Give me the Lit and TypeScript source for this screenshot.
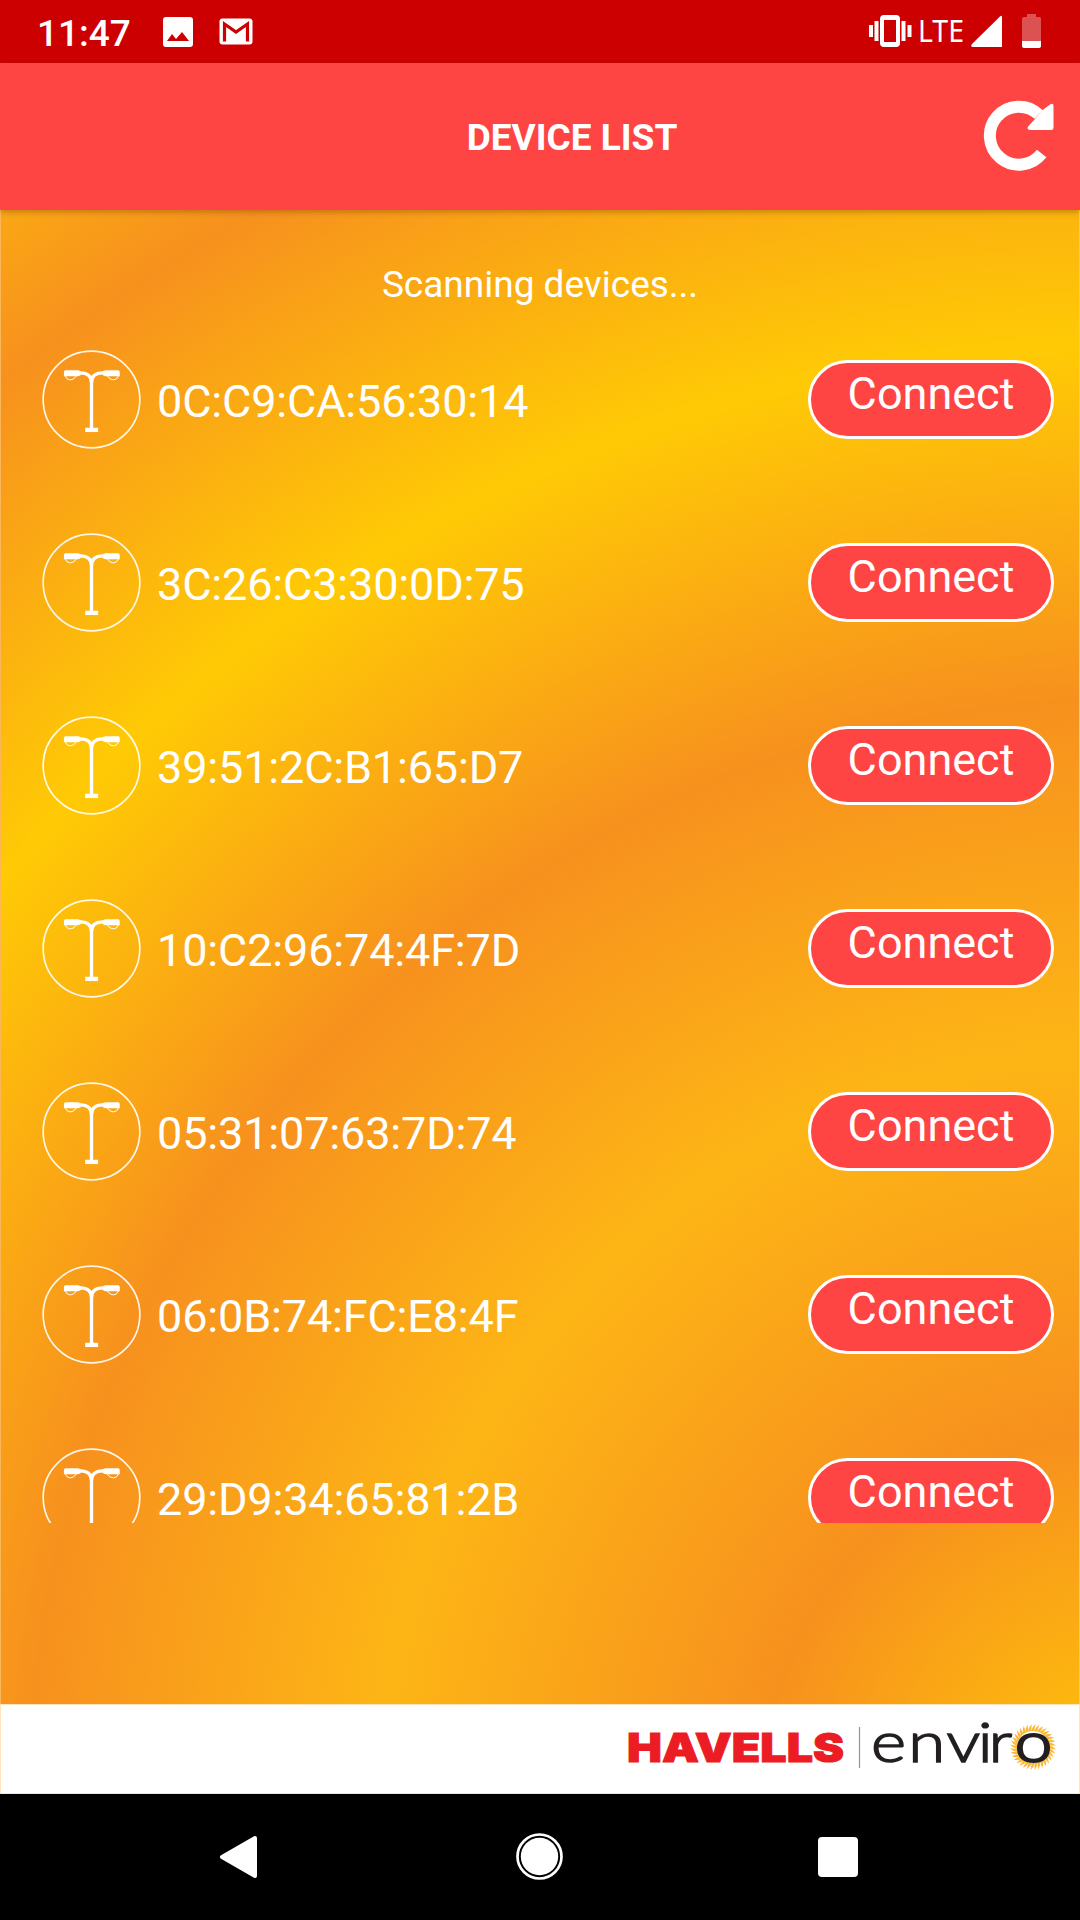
import { LitElement, html, css, svg } from "lit";
import { customElement, property } from "lit/decorators.js";

const DEVICES = [
  "0C:C9:CA:56:30:14",
  "3C:26:C3:30:0D:75",
  "39:51:2C:B1:65:D7",
  "10:C2:96:74:4F:7D",
  "05:31:07:63:7D:74",
  "06:0B:74:FC:E8:4F",
  "29:D9:34:65:81:2B",
];

const RAYS = Array.from({ length: 36 }, (_, i) => i * 10);

@customElement("device-row")
class DeviceRow extends LitElement {
  @property() address = "";

  static styles = css`
    :host {
      display: flex;
      align-items: center;
      height: 100px;
      flex: none;
      padding: 0 26px 0 42px;
      color: #fff;
    }
    .lamp {
      width: 99px;
      height: 99px;
      flex: none;
    }
    .address {
      flex: 1;
      margin-left: 16px;
      padding-top: 6px;
      font-size: 45px;
      line-height: 54px;
      letter-spacing: -0.16px;
      white-space: nowrap;
    }
    .connect {
      box-sizing: border-box;
      width: 246px;
      height: 79px;
      border: 3px solid #fff;
      border-radius: 40px;
      background: #ff4444;
      color: #fff;
      font: 400 45px/54px Roboto, sans-serif;
      padding: 0 0 11px;
      margin: 0;
      text-align: center;
    }
  `;

  render() {
    return html`
      <svg class="lamp" viewBox="35 29 298 298" fill="none" stroke="#fff">
        <circle cx="184" cy="178" r="145.500" stroke-width="5" stroke-opacity=".9" />
        <path d="M184 266V128Q184 98 150 98M184 128Q184 98 218 98" stroke-width="10" />
        <path d="M165 263h39v13h-39z" fill="#fff" stroke="none" />
        <path d="M106 90H144L152 93V104L144 108H101V95Q101 90 106 90ZM264 90H226L217 93V104L226 108H269V95Q269 90 264 90Z" fill="#fff" stroke="none" />
        <path d="M105 107Q109 119 120 119Q132 119 138 107M265 107Q261 119 250 119Q238 119 232 107" stroke-width="3" />
      </svg>
      <span class="address">${this.address}</span>
      <button class="connect">Connect</button>
    `;
  }
}

@customElement("app-root")
class AppRoot extends LitElement {
  static styles = css`
    :host {
      display: flex;
      flex-direction: column;
      width: 1080px;
      height: 1920px;
      overflow: hidden;
      font-family: Roboto, sans-serif;
      color: #fff;
    }
    .status {
      height: 63px;
      flex: none;
      display: flex;
      justify-content: space-between;
      background: #cc0000;
    }
    .status-left {
      display: flex;
      align-items: center;
      padding-left: 37px;
    }
    .clock {
      width: 126px;
      font-size: 37px;
      font-weight: 500;
      line-height: 63px;
      padding-top: 3px;
    }
    .status-svg {
      display: block;
      height: 63px;
      flex: none;
    }
    .network {
      font: 400 31.5px "Noto Sans", sans-serif;
    }
    .header {
      height: 147px;
      flex: none;
      display: grid;
      grid-template-columns: 228px 1fr 164px;
      align-items: center;
      background: #ff4444;
      box-shadow: 0 2px 6px rgba(90, 50, 0, 0.35);
      z-index: 1;
    }
    .title {
      grid-column: 2;
      margin: 0;
      padding-top: 2px;
      text-align: center;
      font-size: 37px;
      line-height: 44px;
      font-weight: 700;
    }
    .refresh {
      width: 164px;
      height: 147px;
      display: block;
    }
    .content {
      height: 1494px;
      flex: none;
      box-sizing: border-box;
      display: flex;
      flex-direction: column;
      border-left: 1px solid #fbb65a;
      border-right: 1px solid #fdc56a;
      background: radial-gradient(
        circle 2170px at 1129px 1590px,
        #ffc708 0,
        #f7911e 368px,
        #fdb515 750px,
        #f7911e 1100px,
        #ffca05 1455px,
        #f7911e 1812px,
        #ffca05 2170px
      );
    }
    .message {
      margin: 0;
      padding-top: 53px;
      height: 86px;
      text-align: center;
      font-size: 37px;
      line-height: 44px;
      flex: none;
    }
    .list {
      display: flex;
      flex-direction: column;
      gap: 83px;
      height: 1174px;
      overflow: hidden;
      margin: 0 -1px;
    }
    .footer {
      height: 90px;
      flex: none;
      box-sizing: border-box;
      border: 1px solid #ffe4bd;
      background: #fff;
      display: flex;
      justify-content: flex-end;
    }
    .brand {
      width: 480px;
      height: 88px;
      display: block;
      margin-right: -1px;
    }
    .havells {
      font: 900 40px Inter, sans-serif;
    }
    .enviro {
      font: 300 56px Lato, sans-serif;
    }
    .nav {
      flex: 1;
      background: #000;
      display: flex;
      justify-content: space-between;
      align-items: center;
      padding: 0 217px 0 215px;
    }
    .nav-icon {
      width: 50px;
      height: 50px;
      display: block;
    }
  `;

  render() {
    return html`
      <div class="status">
        <div class="status-left">
          <span class="clock">11:47</span>
          <svg class="status-svg" width="100" viewBox="163 0 100 63">
            <path fill="#fff" fill-rule="evenodd" d="M166 17H190Q193 17 193 20V44Q193 47 190 47H166Q163 47 163 44V20Q163 17 166 17ZM167 41H189L182 32L176 39L172 34Z" />
            <rect x="219.500" y="18.500" width="33" height="26" rx="3" fill="#fff" />
            <path d="M224.500 41.500V24L236 32L247.500 24V41.500" fill="none" stroke="#c00" stroke-width="3.200" />
          </svg>
        </div>
        <svg class="status-svg" width="220" viewBox="860 0 220 63" fill="#fff">
          <path fill-rule="evenodd" d="M884 15H896Q900 15 900 19V43Q900 47 896 47H884Q880 47 880 43V19Q880 15 884 15ZM884 20V42H896V20ZM869 25h4v12h-4zM874.500 21h4v20h-4zM901.500 21h4v20h-4zM907.500 25h4v12h-4z" />
          <text class="network" x="918" y="42" textLength="46" lengthAdjust="spacingAndGlyphs">LTE</text>
          <path d="M1002 17V47H973Q970 47 972 44L1000 16.500Q1002 15 1002 17Z" />
          <path d="M1027 14H1036V17H1040Q1041 17 1041 19V41H1022V19Q1022 17 1024 17H1027Z" opacity=".32" />
          <path d="M1022 41H1041V46Q1041 48 1039 48H1024Q1022 48 1022 46Z" />
        </svg>
      </div>
      <header class="header">
        <h1 class="title">DEVICE LIST</h1>
        <svg class="refresh" viewBox="916 63 164 147">
          <path d="M1041.700 153.500A29 29 0 1 1 1038.700 114.500" fill="none" stroke="#fff" stroke-width="12" />
          <path d="M1042 110.500L1050 104.500Q1053.500 102.500 1053.500 106V127.500Q1053.500 130 1051 130H1030Q1026 129.500 1028.500 126L1035 119Z" fill="#fff" />
        </svg>
      </header>
      <main class="content">
        <p class="message">Scanning devices...</p>
        <div class="list">
          ${DEVICES.map((d) => html`<device-row .address=${d}></device-row>`)}
        </div>
      </main>
      <footer class="footer">
        <svg class="brand" viewBox="600 1705 480 88">
          <text class="havells" x="627" y="1762" textLength="217" lengthAdjust="spacingAndGlyphs" fill="#ec1c24" stroke="#ec1c24" stroke-width="1">HAVELLS</text>
          <path d="M859.500 1727V1768" stroke="#999" stroke-width="1.300" />
          ${RAYS.map(
            (a) => svg`<path transform="translate(1033 1747) rotate(${a})" d="M16 -2Q20 -1 23 2.500Q19 2 16 1Z" fill="#fbb938" />`
          )}
          <ellipse cx="1033" cy="1747.500" rx="16" ry="14.500" fill="#fff" />
          <g class="enviro" fill="#231f20" stroke="#231f20" stroke-width="1.500" transform="translate(871 1761.500) scale(1.2 1)">
            <text x="0 31 63 89 98">envir</text>
            <text x="135.500" text-anchor="middle" stroke-width="2.200">o</text>
          </g>
        </svg>
      </footer>
      <nav class="nav">
        <svg class="nav-icon" viewBox="215 1832 50 50">
          <path d="M255 1838L222 1857L255 1876Z" fill="#fff" stroke="#fff" stroke-width="4" stroke-linejoin="round" />
        </svg>
        <svg class="nav-icon" viewBox="514 1832 50 50">
          <circle cx="539.500" cy="1856.500" r="22" fill="none" stroke="#fff" stroke-width="2.700" />
          <circle cx="539.500" cy="1856.500" r="18.700" fill="#fff" />
        </svg>
        <svg class="nav-icon" viewBox="813 1832 50 50">
          <rect x="818" y="1837" width="40" height="40" rx="4" fill="#fff" />
        </svg>
      </nav>
    `;
  }
}
